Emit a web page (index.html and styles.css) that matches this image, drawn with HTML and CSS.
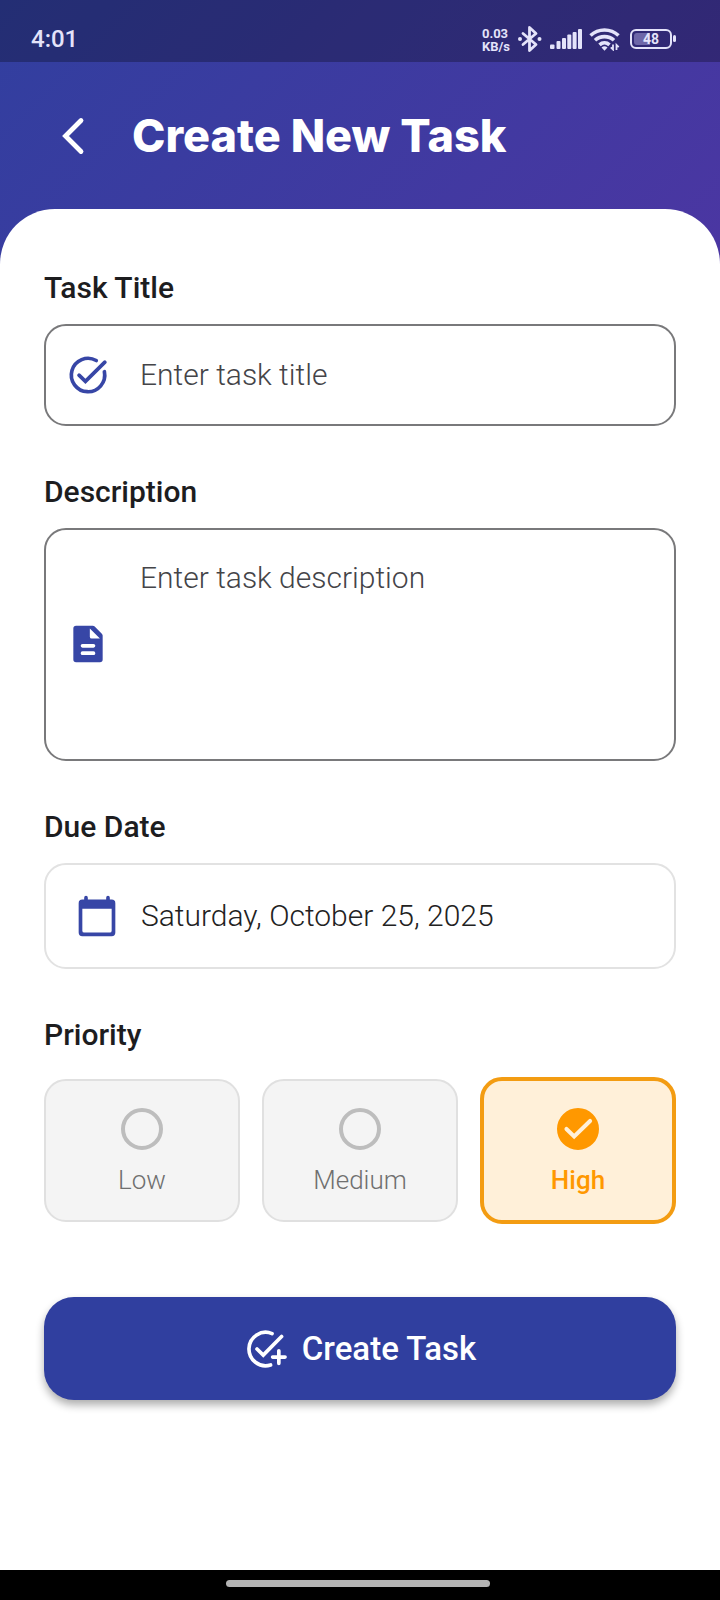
FILE: index.html
```
<!DOCTYPE html>
<html lang="en">
<head>
<meta charset="utf-8">
<meta name="viewport" content="width=device-width, initial-scale=1">
<title>Create New Task</title>
<link rel="stylesheet" href="styles.css">
</head>
<body>
<div class="screen">
  <div class="statusbar">
    <span class="clock">4:01</span>
    <div class="indicators">
      <span class="speed">0.03<br>KB/s</span>
      <svg width="26" height="28" viewBox="0 0 26 28" aria-label="Bluetooth"><path d="M6 8.500 19 19.500 12.500 25.500V2.500L19 8.500 6 19.500" fill="none" stroke="currentColor" stroke-width="2.800" stroke-linejoin="round" stroke-linecap="round"/><circle cx="3" cy="14" r="2" fill="currentColor"/><circle cx="22.500" cy="14" r="2" fill="currentColor"/></svg>
      <svg width="32" height="22" viewBox="0 0 32 22" aria-label="Signal"><g fill="currentColor"><rect y="16.500" width="4.500" height="4.500" rx="1"/><rect x="6.500" y="13" width="4" height="8" rx="1"/><rect x="12" y="10" width="4" height="11" rx="1"/><rect x="17.300" y="6.500" width="4" height="14.500" rx="1"/><rect x="22.600" y="4" width="4" height="17" rx="1"/><rect x="28" y="1" width="4" height="20" rx="1"/></g></svg>
      <svg width="32" height="24" viewBox="0 0 32 24" aria-label="Wi-Fi"><g fill="none" stroke="currentColor" stroke-width="3.600"><path d="M1.500 8.500A20.500 20.500 0 0 1 29.500 8.500"/><path d="M6 13.300A14 14 0 0 1 25 13.300"/><path d="M10.500 17.800A7.500 7.500 0 0 1 20.500 17.800"/></g><path d="M12.500 20.500a4.500 4.500 0 0 1 6 0L15.500 23.800Z" fill="currentColor"/><path d="M24 17.500v5l-2.200-2.200M27.500 23v-5l2.200 2.200" fill="none" stroke="currentColor" stroke-width="1.800"/></svg>
      <span class="battery"><span class="battery-body"><span class="battery-level">48</span></span><span class="battery-tip"></span></span>
    </div>
  </div>

  <header class="header">
    <button class="back" type="button" aria-label="Back">
      <svg width="24" height="38" viewBox="0 0 24 38"><path d="M20 3.500 4.500 19 20 34.500" fill="none" stroke="currentColor" stroke-width="4.800" stroke-linecap="round"/></svg>
    </button>
    <h1 class="title">Create New Task</h1>
  </header>

  <form class="sheet">
    <div class="group">
      <label class="label" for="task-title">Task Title</label>
      <div class="field">
        <svg class="icon" viewBox="0 0 24 24"><path d="M20.930 10.200A9.100 9.100 0 1 1 16.500 4.100M7.100 12.100 10.600 15.500 21.200 5" fill="none" stroke="currentColor" stroke-width="2" stroke-linecap="round"/></svg>
        <input class="control" id="task-title" type="text" placeholder="Enter task title">
      </div>
    </div>

    <div class="group">
      <label class="label" for="task-desc">Description</label>
      <div class="field field-area">
        <svg class="icon" viewBox="0 0 24 24"><path fill="currentColor" fill-rule="evenodd" d="M14.600 2H5.500A1.500 1.500 0 0 0 4 3.500v17A1.500 1.500 0 0 0 5.500 22h13a1.500 1.500 0 0 0 1.500-1.500V7.400a1.500 1.500 0 0 0-.450-1.050L15.650 2.450A1.500 1.500 0 0 0 14.600 2ZM9 16h6a1 1 0 0 1 0 2H9a1 1 0 0 1 0-2Zm0-4h6a1 1 0 0 1 0 2H9a1 1 0 0 1 0-2Zm4-8.500L18.500 9H14a1 1 0 0 1-1-1Z"/></svg>
        <textarea class="control" id="task-desc" rows="4" placeholder="Enter task description"></textarea>
      </div>
    </div>

    <div class="group">
      <label class="label" for="due-date">Due Date</label>
      <div class="field field-date">
        <svg class="icon" viewBox="0 0 24 24"><path fill="currentColor" fill-rule="evenodd" d="M5 2a1 1 0 0 1 2 0v1h10V2a1 1 0 0 1 2 0v1h1a2 2 0 0 1 2 2v16a2 2 0 0 1-2 2H4a2 2 0 0 1-2-2V5a2 2 0 0 1 2-2h1ZM4 8v12a1 1 0 0 0 1 1h14a1 1 0 0 0 1-1V8Z"/></svg>
        <input class="control" id="due-date" type="text" value="Saturday, October 25, 2025" readonly>
      </div>
    </div>

    <fieldset class="priority">
      <legend class="label">Priority</legend>
      <div class="options">
        <label class="option"><input class="radio" type="radio" name="priority" value="low"><span>Low</span></label>
        <label class="option"><input class="radio" type="radio" name="priority" value="medium"><span>Medium</span></label>
        <label class="option option-high"><input class="radio" type="radio" name="priority" value="high" checked><svg class="tick" viewBox="0 0 24 24"><path d="M5.400 12 9.800 16.300 18.900 7.400" fill="none" stroke="currentColor" stroke-width="2.300" stroke-linecap="round"/></svg><span>High</span></label>
      </div>
    </fieldset>

    <button class="submit" type="submit">
      <svg class="icon" viewBox="0 0 24 24"><path d="M15.300 3.600A9.100 9.100 0 1 0 14.500 20.700M7.100 12 10.500 15.300 20.500 5.200M19 13v6.800M15.600 16.400h6.800" fill="none" stroke="currentColor" stroke-width="2" stroke-linecap="round"/></svg>
      Create Task
    </button>
  </form>

  <div class="navbar"><span class="handle"></span></div>
</div>
</body>
</html>
```

FILE: styles.css
```
* { box-sizing: border-box; }

body {
  margin: 0;
  background: #fff;
  font-family: Roboto, "Liberation Sans", sans-serif;
}

.screen {
  min-height: 100vh;
  display: flex;
  flex-direction: column;
  background: linear-gradient(135deg, #313f9f, #4b36a2) top / 100% 264px no-repeat, #fff;
}

.statusbar {
  height: 62px;
  padding: 15px 44px 0 31px;
  display: flex;
  align-items: center;
  justify-content: space-between;
  background: rgba(0, 0, 0, 0.27);
  color: #e4e3fa;
}

.clock {
  font-size: 24px;
  line-height: 32px;
  font-weight: 500;
}

.indicators {
  display: flex;
  align-items: center;
  gap: 7px;
}

.speed {
  padding-top: 3px;
  font-size: 13px;
  line-height: 13px;
  font-weight: 700;
}

.battery {
  display: flex;
  align-items: center;
  gap: 1px;
  margin-left: 2px;
}

.battery-body {
  width: 42px;
  height: 20px;
  border: 2px solid currentColor;
  border-radius: 6px;
  padding: 2px;
}

.battery-level {
  display: block;
  border-radius: 3px;
  background: linear-gradient(90deg, #6d66a8 48%, transparent 48%);
  font-size: 14px;
  line-height: 12px;
  font-weight: 700;
  text-align: center;
}

.battery-tip {
  width: 3px;
  height: 7px;
  border-radius: 2px;
  background: currentColor;
}

.header {
  height: 147px;
  padding: 0 44px 0 61px;
  display: flex;
  align-items: center;
  gap: 47px;
  color: #fff;
}

.back {
  display: flex;
  padding: 0;
  border: 0;
  background: none;
  color: inherit;
}

.title {
  margin: 0;
  font-family: Inter, "Liberation Sans", sans-serif;
  font-size: 45px;
  line-height: 60px;
  font-weight: 800;
}

.sheet {
  flex: 1;
  padding: 57px 44px 44px;
  border-radius: 55px 55px 0 0;
  background: #fff;
}

.group {
  display: flex;
  flex-direction: column;
  gap: 14px;
  margin-bottom: 44px;
}

.label {
  padding: 0;
  font-size: 30px;
  line-height: 44px;
  font-weight: 500;
  color: #1d1d1f;
}

.field {
  display: flex;
  align-items: center;
  gap: 30px;
  min-height: 102px;
  padding: 0 20px;
  border: 2px solid #79797b;
  border-radius: 22px;
}

.field-area {
  min-height: 233px;
  padding: 25px 20px 26px;
}

.field-date {
  min-height: 106px;
  padding: 0 29px;
  gap: 22px;
  border-color: #e2e2e2;
}

.icon {
  flex: none;
  width: 44px;
  height: 44px;
  color: #3746a6;
}

.control {
  flex: 1;
  min-width: 0;
  padding: 0;
  border: 0;
  outline: 0;
  background: none;
  font-family: inherit;
  font-size: 30px;
  line-height: 44px;
  font-weight: 300;
  color: #222;
  resize: none;
}

.control::placeholder {
  color: #444448;
  opacity: 1;
}

.priority {
  margin: 0;
  padding: 0;
  border: 0;
  min-width: 0;
}

.options {
  display: grid;
  grid-template-columns: repeat(3, 1fr);
  align-items: center;
  gap: 22px;
  margin-top: 20px;
}

.option {
  display: grid;
  justify-items: center;
  row-gap: 12px;
  padding: 27px 0 21px;
  border: 2px solid #e0e0e0;
  border-radius: 22px;
  background: #f4f4f4;
  font-size: 26px;
  line-height: 37px;
  font-weight: 300;
  color: #6f6f6f;
}

.option-high {
  border: 4px solid #f39c12;
  background: #fff0d9;
  font-weight: 500;
  color: #ff9800;
}

.radio {
  grid-area: 1 / 1;
  appearance: none;
  width: 42px;
  height: 42px;
  margin: 0;
  border: 4px solid #bdbdbd;
  border-radius: 50%;
}

.radio:checked {
  border-color: #ff9800;
  background: #ff9800;
}

.tick {
  grid-area: 1 / 1;
  width: 42px;
  height: 42px;
  color: #fff0d9;
}

.submit {
  display: flex;
  align-items: center;
  justify-content: center;
  gap: 14px;
  width: 100%;
  min-height: 103px;
  margin-top: 73px;
  border: 0;
  border-radius: 30px;
  background: #303f9f;
  box-shadow: 0 5px 9px rgba(0, 0, 0, 0.32);
  font-family: inherit;
  font-size: 33px;
  font-weight: 500;
  color: #fff;
}

.submit .icon { color: inherit; }

.navbar {
  height: 30px;
  display: flex;
  justify-content: center;
  align-items: center;
  padding: 0 4px 3px 0;
  background: #000;
}

.handle {
  width: 37%;
  height: 7px;
  border-radius: 4px;
  background: #b4b4b4;
}
```
